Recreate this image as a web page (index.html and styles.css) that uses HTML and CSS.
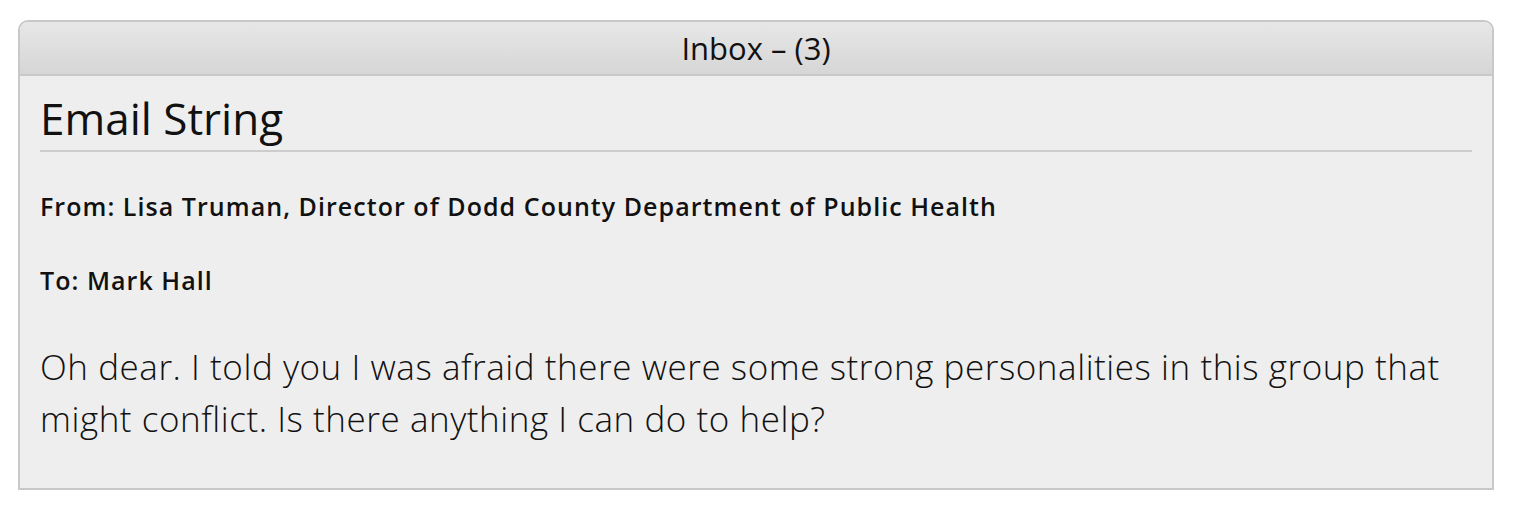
FILE: index.html
```html
<!DOCTYPE html>
<html>
<head>
<meta charset="utf-8">
<link rel="stylesheet" href="styles.css">
</head>
<body>
<div class="panel">
  <div class="panel-header">Inbox – (3)</div>
  <div class="panel-body">
    <h2 class="title">Email String</h2>
    <p class="meta meta-from">From: Lisa Truman, Director of Dodd County Department of Public Health</p>
    <p class="meta meta-to">To: Mark Hall</p>
    <p class="message">Oh dear. I told you I was afraid there were some strong personalities in this group that might conflict. Is there anything I can do to help?</p>
  </div>
</div>
</body>
</html>
```
FILE: styles.css
```css
html, body {
  margin: 0;
  padding: 0;
  background: #ffffff;
}
body {
  font-family: "Open Sans", "Lato", sans-serif;
  color: #111111;
}
.panel {
  box-sizing: border-box;
  width: 1476px;
  height: 470px;
  margin: 20px 0 0 18px;
  border: 2px solid #c8c8c8;
  border-radius: 10px 10px 0 0;
  background: #eeeeee;
  display: flex;
  flex-direction: column;
}
.panel-header {
  height: 52px;
  border-bottom: 2px solid #c8c8c8;
  border-radius: 8px 8px 0 0;
  background: linear-gradient(#e7e7e7, #d6d6d6);
  display: flex;
  align-items: center;
  justify-content: center;
  font-size: 31px;
  color: #111111;
}
.panel-body {
  padding: 16px 20px 0 20px;
  display: flex;
  flex-direction: column;
}
.title {
  margin: 0;
  font-weight: 400;
  font-size: 44px;
  line-height: 52px;
  padding-bottom: 6px;
  border-bottom: 2px solid #cccccc;
  color: #111111;
}
.meta {
  margin: 0;
  font-weight: 600;
  font-size: 25px;
  line-height: 30px;
  letter-spacing: 1.05px;
  color: #111111;
}
.meta-from {
  margin-top: 39px;
}
.meta-to {
  margin-top: 44px;
}
.message {
  margin: 46px 0 0 0;
  font-size: 35px;
  line-height: 52px;
  font-weight: 300;
  letter-spacing: 0.55px;
  color: #111111;
}
```
